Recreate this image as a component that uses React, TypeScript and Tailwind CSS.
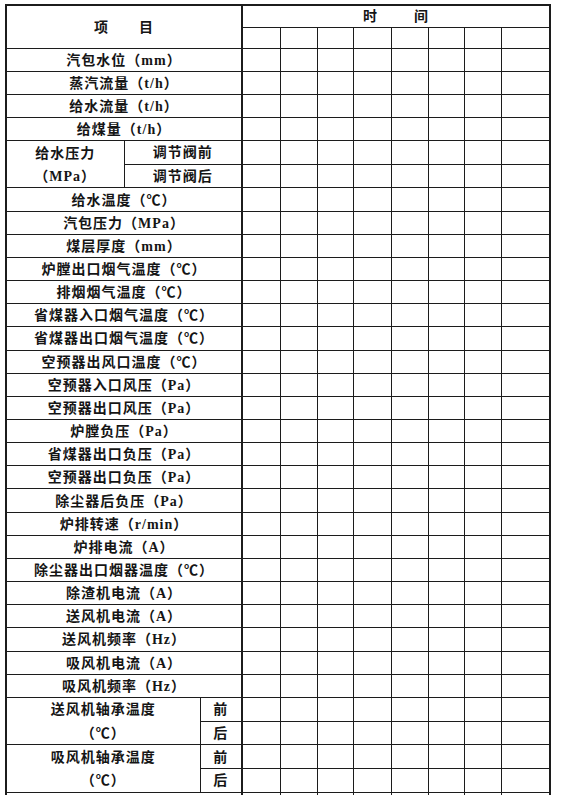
import React from "react";

const F = "font-['Liberation_Serif','Noto_Sans_CJK_SC',serif]";
const cols = [0, 1, 2, 3, 4, 5, 6, 7];
const widths = [118, 76, 42, 38, 37, 36, 38, 37, 36, 37, 49];

const cell = "border border-[#1c1c1c] p-0";
const rowH = "h-[23.17px]";

function Data() {
  return (
    <>
      {cols.map((i) => (
        <td key={i} className={cell} />
      ))}
    </>
  );
}

function Single({ label }: { label: string }) {
  return (
    <tr className={rowH}>
      <td colSpan={3} className={`${cell} border-r-2 text-center align-middle pt-[2px]`}>
        {label}
      </td>
      <Data />
    </tr>
  );
}

function Line({ children }: { children: React.ReactNode }) {
  return <div className="h-[23.17px] flex items-center justify-center pt-[2px]">{children}</div>;
}

const before = ["汽包水位（mm）", "蒸汽流量（t/h）", "给水流量（t/h）", "给煤量（t/h）"];
const middle = [
  "给水温度（℃）",
  "汽包压力（MPa）",
  "煤层厚度（mm）",
  "炉膛出口烟气温度（℃）",
  "排烟烟气温度（℃）",
  "省煤器入口烟气温度（℃）",
  "省煤器出口烟气温度（℃）",
  "空预器出风口温度（℃）",
  "空预器入口风压（Pa）",
  "空预器出口风压（Pa）",
  "炉膛负压（Pa）",
  "省煤器出口负压（Pa）",
  "空预器出口负压（Pa）",
  "除尘器后负压（Pa）",
  "炉排转速（r/min）",
  "炉排电流（A）",
  "除尘器出口烟器温度（℃）",
  "除渣机电流（A）",
  "送风机电流（A）",
  "送风机频率（Hz）",
  "吸风机电流（A）",
  "吸风机频率（Hz）",
];

function Bearing({ name }: { name: string }) {
  return (
    <>
      <tr className={rowH}>
        <td colSpan={2} rowSpan={2} className={`${cell} align-top`}>
          <Line>{name}</Line>
          <Line>（℃）</Line>
        </td>
        <td className={`${cell} border-r-2 text-center pt-[2px]`}>前</td>
        <Data />
      </tr>
      <tr className={rowH}>
        <td className={`${cell} border-r-2 text-center pt-[2px]`}>后</td>
        <Data />
      </tr>
    </>
  );
}

export default function App() {
  return (
    <div className="w-[561px] h-[795px] overflow-hidden bg-white">
      <table
        className={`ml-[5px] mt-[4px] table-fixed border-collapse border-2 border-[#1c1c1c] text-[14px] tracking-[1px] leading-none font-semibold text-[#151515] ${F}`}
        style={{ width: 546 }}
      >
        <colgroup>
          {widths.map((w, i) => (
            <col key={i} style={{ width: w }} />
          ))}
        </colgroup>
        <tbody>
          <tr className="h-[22px]">
            <td colSpan={3} rowSpan={2} className={`${cell} border-r-2 align-middle`}>
              <div className="flex justify-center gap-[30px] pt-[2px]">
                <span>项</span>
                <span>目</span>
              </div>
            </td>
            <td colSpan={8} className={`${cell} align-middle`}>
              <div className="flex justify-center gap-[36px] pt-[1px]">
                <span>时</span>
                <span>间</span>
              </div>
            </td>
          </tr>
          <tr className="h-[21px]">
            <Data />
          </tr>
          {before.map((l) => (
            <Single key={l} label={l} />
          ))}
          <tr className={rowH}>
            <td rowSpan={2} className={`${cell} align-top`}>
              <Line>给水压力</Line>
              <Line>（MPa）</Line>
            </td>
            <td colSpan={2} className={`${cell} border-r-2 text-center pt-[2px]`}>调节阀前</td>
            <Data />
          </tr>
          <tr className={rowH}>
            <td colSpan={2} className={`${cell} border-r-2 text-center pt-[2px]`}>调节阀后</td>
            <Data />
          </tr>
          {middle.map((l) => (
            <Single key={l} label={l} />
          ))}
          <Bearing name="送风机轴承温度" />
          <Bearing name="吸风机轴承温度" />
          <tr className={rowH}>
            <td colSpan={3} className={`${cell} border-r-2`} />
            <Data />
          </tr>
        </tbody>
      </table>
    </div>
  );
}
